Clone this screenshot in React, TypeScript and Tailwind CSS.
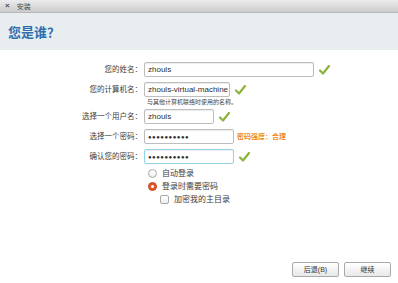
const font = "font-['Liberation_Sans','Noto_Sans_CJK_SC',sans-serif]";

const Tick = () => (
  <svg width="11" height="10" viewBox="0 0 11 10" className="ml-[5px] shrink-0">
    <path d="M1 5.5 L4 8.5 L10 1" fill="none" stroke="#8db33c" strokeWidth="2.2" strokeLinecap="round" strokeLinejoin="round" />
  </svg>
);

const Row = ({ label, children }: { label: string; children: React.ReactNode }) => (
  <div className="flex items-center h-[15px]">
    <div className="w-[144px] shrink-0 pr-[2px] text-right text-[7.5px] text-[#3c3c3c] leading-none">{label}</div>
    <div className="flex items-center">{children}</div>
  </div>
);

const Field = ({ w, value, dots, focus }: { w: string; value: string; dots?: boolean; focus?: boolean }) => (
  <div
    className={`${w} h-[15px] flex items-center pl-[3px] bg-white rounded-[2px] border shadow-[inset_0_1px_1px_rgba(0,0,0,0.08)] ${
      focus ? "border-[#93d3e8]" : "border-[#bdbdbd]"
    } ${dots ? "text-[6px] tracking-[0.5px]" : "text-[8px]"} text-[#2e2e2e] leading-none whitespace-nowrap overflow-hidden`}
  >
    {value}
  </div>
);

export default function App() {
  return (
    <div className={`${font} w-[398px] h-[283px] flex flex-col bg-white overflow-hidden`}>
      <div className="h-[13px] flex items-center gap-[7px] pl-[5px] bg-gradient-to-b from-[#ececec] to-[#cbcbcb] border-b border-[#b8b8b8] text-[7px] text-[#4a4a4a] leading-none">
        <span className="text-[8px] font-bold">×</span>
        <span>安装</span>
      </div>
      <div className="h-[37px] bg-[#e8edf0] flex items-center pl-[8px] pt-[1px]">
        <h1 className="text-[13px] font-bold text-[#2f6fae] leading-none">您是谁？</h1>
      </div>
      <div className="flex flex-col pt-[12px]">
        <Row label="您的姓名：">
          <Field w="w-[170px]" value="zhouls" />
          <Tick />
        </Row>
        <div className="h-[5px]" />
        <Row label="您的计算机名：">
          <Field w="w-[86px]" value="zhouls-virtual-machine" />
          <Tick />
        </Row>
        <div className="pl-[147px] pt-[2px] h-[12px] text-[6px] text-[#444] leading-none">与其他计算机联络时使用的名称。</div>
        <Row label="选择一个用户名：">
          <Field w="w-[70px]" value="zhouls" />
          <Tick />
        </Row>
        <div className="h-[5px]" />
        <Row label="选择一个密码：">
          <Field w="w-[90px]" value="●●●●●●●●●●" dots />
          <span className="ml-[3px] text-[7px] font-bold text-[#f08c1e] leading-none">密码强度：合理</span>
        </Row>
        <div className="h-[5px]" />
        <Row label="确认您的密码：">
          <Field w="w-[90px]" value="●●●●●●●●●●" dots focus />
          <Tick />
        </Row>
        <div className="flex flex-col gap-[4px] pl-[148px] pt-[5px] text-[8px] text-[#3c3c3c] leading-none">
          <label className="flex items-center gap-[5px] h-[9px]">
            <span className="w-[9px] h-[9px] rounded-full border border-[#a8a8a8] bg-gradient-to-b from-white to-[#eee]" />
            自动登录
          </label>
          <label className="flex items-center gap-[5px] h-[9px]">
            <span className="w-[9px] h-[9px] rounded-full bg-[#e2572a] border border-[#c9481f] flex items-center justify-center">
              <span className="w-[3px] h-[3px] rounded-full bg-white" />
            </span>
            登录时需要密码
          </label>
          <label className="flex items-center gap-[5px] h-[9px] pl-[12px]">
            <span className="w-[9px] h-[9px] rounded-[2px] border border-[#a8a8a8] bg-gradient-to-b from-white to-[#eee]" />
            加密我的主目录
          </label>
        </div>
      </div>
      <div className="mt-auto flex justify-end gap-[5px] pr-[7px] pb-[6px]">
        <button className="w-[47px] h-[15px] rounded-[2px] border border-[#a9a9a9] bg-gradient-to-b from-white to-[#e8e8e8] text-[7px] text-[#333] leading-none">后退(B)</button>
        <button className="w-[47px] h-[15px] rounded-[2px] border border-[#a9a9a9] bg-gradient-to-b from-white to-[#e8e8e8] text-[7px] text-[#333] leading-none">继续</button>
      </div>
    </div>
  );
}
